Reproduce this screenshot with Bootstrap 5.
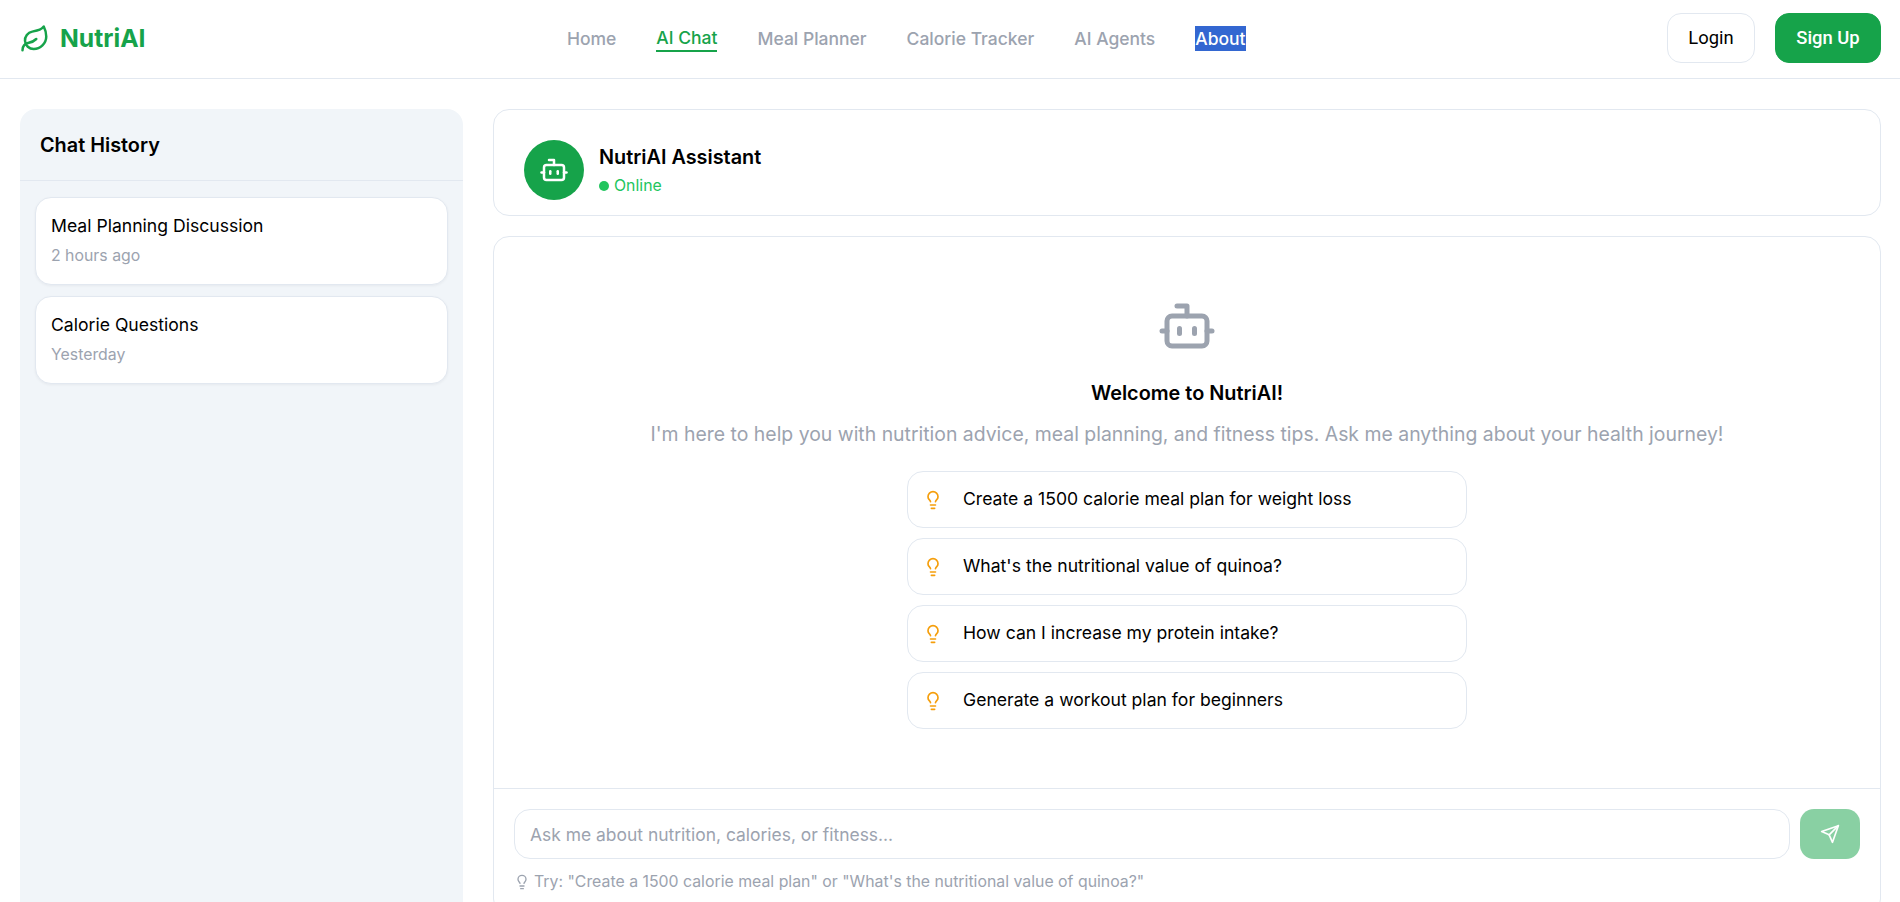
<!DOCTYPE html>
<html lang="en">
<head>
  <meta charset="UTF-8" />
  <meta name="viewport" content="width=device-width, initial-scale=1.0">
  <title>NutriAI | AI Chat</title>
  <link href="https://cdn.jsdelivr.net/npm/bootstrap@5.3.3/dist/css/bootstrap.min.css" rel="stylesheet">
  <style>
    html, body { height: 100%; overflow: hidden; }
    body {
      font-family: "Inter", "Liberation Sans", sans-serif;
      font-size: 17.6px;
      color: #000;
      background: #fff;
    }
    .top-bar {
      height: 79px;
      padding: 0 19px 0 20px;
      background: #fff;
      border-bottom: 1px solid #e2e8f0;
    }
    .logo { color: #16a34a; font-size: 24.7px; font-weight: 700; gap: 10px; text-decoration: none; }
    .top-links { gap: 40px; margin-bottom: 2px; font-size: 17.5px; }
    .top-links a { color: #9ca3af; font-weight: 500; text-decoration: none; display: block; line-height: 25px; }
    .top-links a.on { color: #16a34a; border-bottom: 2px solid #16a34a; }
    .top-links a.picked { color: #fff; background: #3367d1; }
    .auth-wrap { gap: 20px; margin-bottom: 2px; }
    .auth-btn {
      font-family: "Roboto", sans-serif;
      font-size: 18.4px;
      height: 50px;
      border-radius: 14px;
      padding: 0;
    }
    .btn-login { width: 88px; color: #000; background: #fff; border: 1px solid #e2e8f0; font-weight: 450; }
    .btn-signup { width: 106px; color: #fff; background: #16a34a; border: 1px solid #16a34a; font-weight: 500; }
    .page-body { gap: 30px; padding: 30px 19px 0 20px; height: 1000px; }
    .side-panel { width: 443px; flex: none; background: #f1f5f9; border-radius: 16px; }
    .side-head { padding: 20px; height: 72px; border-bottom: 1px solid #e2e8f0; font-size: 19.85px; font-weight: 600; line-height: 32px; }
    .side-list { padding: 16px 15px; gap: 11px; }
    .hist-item {
      height: 88px;
      padding: 14px 15px;
      background: #fff;
      border: 1px solid #e2e8f0;
      border-radius: 16px;
      box-shadow: 0 1px 3px rgba(15, 23, 42, .05);
    }
    .hist-title { font-weight: 400; line-height: 28px; }
    .hist-time { color: #9ca3af; font-size: 15.85px; line-height: 24px; margin-top: 4px; }
    .main-col { gap: 20px; min-width: 0; }
    .panel { background: #fff; border: 1px solid #e2e8f0; border-radius: 16px; }
    .bot-head { padding: 30px 30px 15px; gap: 15px; }
    .bot-avatar { width: 60px; height: 60px; background: #16a34a; color: #fff; }
    .bot-name { font-size: 19.85px; font-weight: 600; line-height: 28px; }
    .bot-status { color: #22c55e; font-size: 15.85px; line-height: 24px; gap: 5px; margin-top: 3px; }
    .status-dot { width: 10px; height: 10px; background: #22c55e; }
    .chat-area { height: 551px; padding: 59px 30px 0; color: #000; }
    .chat-robot { color: #9ca3af; display: block; }
    .chat-title { font-size: 19.85px; font-weight: 600; line-height: 30px; margin: 22px 0 11px; }
    .chat-sub { color: #9ca3af; font-size: 19.42px; line-height: 30px; margin-bottom: 22px; }
    .tips { width: 560px; gap: 10px; }
    .tip-row {
      height: 57px;
      padding: 0 15px;
      gap: 20px;
      border: 1px solid #e2e8f0;
      border-radius: 16px;
      font-weight: 400;
    }
    .tip-row svg { color: #f59e0b; flex: none; }
    .ask-area { border-top: 1px solid #e2e8f0; padding: 20px; }
    .ask-row { gap: 10px; }
    .ask-box {
      height: 50px;
      border: 1px solid #e2e8f0;
      border-radius: 16px;
      padding: 0 15px;
      font-size: 17.45px;
      box-shadow: none;
    }
    .ask-box::placeholder { color: #9ca3af; opacity: 1; }
    .ask-send { width: 60px; height: 50px; flex: none; background: #16a34a; opacity: .5; border: 0; border-radius: 14px; color: #fff; }
    .ask-hint { color: #9ca3af; font-size: 15.85px; gap: 4px; margin-top: 11px; line-height: 24px; }
  </style>
</head>
<body>

<nav class="top-bar d-flex align-items-center justify-content-between">
  <a href="#" class="logo d-flex align-items-center">
    <svg width="30" height="30" viewBox="0 0 24 24" fill="none" stroke="currentColor" stroke-width="2" stroke-linecap="round" stroke-linejoin="round"><path d="M11 20A7 7 0 0 1 9.8 6.1C15.5 5 17 4.48 19 2c1 2 2 4.18 2 8 0 5.5-4.78 10-10 10Z"/><path d="M2 21c0-3 1.85-5.36 5.08-6C9.5 14.52 12 13 13 12"/></svg>
    NutriAI
  </a>
  <div class="top-links d-flex align-items-center">
    <a href="#">Home</a>
    <a href="#" class="on">AI Chat</a>
    <a href="#">Meal Planner</a>
    <a href="#">Calorie Tracker</a>
    <a href="#">AI Agents</a>
    <a href="#" class="picked">About</a>
  </div>
  <div class="auth-wrap d-flex align-items-center">
    <button class="btn auth-btn btn-login">Login</button>
    <button class="btn auth-btn btn-signup">Sign Up</button>
  </div>
</nav>

<div class="page-body d-flex">
  <!-- sidebar -->
  <aside class="side-panel">
    <div class="side-head">Chat History</div>
    <div class="side-list d-flex flex-column">
      <div class="hist-item">
        <div class="hist-title">Meal Planning Discussion</div>
        <div class="hist-time">2 hours ago</div>
      </div>
      <div class="hist-item">
        <div class="hist-title">Calorie Questions</div>
        <div class="hist-time">Yesterday</div>
      </div>
    </div>
  </aside>

  <!-- chat -->
  <main class="main-col flex-grow-1 d-flex flex-column">
    <div class="panel bot-head d-flex align-items-center">
      <div class="bot-avatar rounded-circle d-flex align-items-center justify-content-center">
        <svg width="30" height="30" viewBox="0 0 24 24" fill="none" stroke="currentColor" stroke-width="2" stroke-linecap="round" stroke-linejoin="round"><path d="M12 8V4H8"/><rect width="16" height="12" x="4" y="8" rx="2"/><path d="M2 14h2"/><path d="M20 14h2"/><path d="M15 13v2"/><path d="M9 13v2"/></svg>
      </div>
      <div>
        <div class="bot-name">NutriAI Assistant</div>
        <div class="bot-status d-flex align-items-center"><span class="status-dot rounded-circle"></span>Online</div>
      </div>
    </div>

    <div class="panel">
      <div class="chat-area d-flex flex-column align-items-center">
        <svg class="chat-robot" width="60" height="60" viewBox="0 0 24 24" fill="none" stroke="currentColor" stroke-width="2" stroke-linecap="round" stroke-linejoin="round"><path d="M12 8V4H8"/><rect width="16" height="12" x="4" y="8" rx="2"/><path d="M2 14h2"/><path d="M20 14h2"/><path d="M15 13v2"/><path d="M9 13v2"/></svg>
        <div class="chat-title">Welcome to NutriAI!</div>
        <div class="chat-sub">I'm here to help you with nutrition advice, meal planning, and fitness tips. Ask me anything about your health journey!</div>
        <div class="tips d-flex flex-column">
          <div class="tip-row d-flex align-items-center">
            <svg width="20" height="20" viewBox="0 0 24 24" fill="none" stroke="currentColor" stroke-width="2" stroke-linecap="round" stroke-linejoin="round"><path d="M15 14c.2-1 .7-1.7 1.5-2.5 1-.9 1.5-2.2 1.5-3.5A6 6 0 0 0 6 8c0 1 .2 2.2 1.5 3.5.7.7 1.3 1.5 1.5 2.5"/><path d="M9 18h6"/><path d="M10 22h4"/></svg>
            Create a 1500 calorie meal plan for weight loss
          </div>
          <div class="tip-row d-flex align-items-center">
            <svg width="20" height="20" viewBox="0 0 24 24" fill="none" stroke="currentColor" stroke-width="2" stroke-linecap="round" stroke-linejoin="round"><path d="M15 14c.2-1 .7-1.7 1.5-2.5 1-.9 1.5-2.2 1.5-3.5A6 6 0 0 0 6 8c0 1 .2 2.2 1.5 3.5.7.7 1.3 1.5 1.5 2.5"/><path d="M9 18h6"/><path d="M10 22h4"/></svg>
            What's the nutritional value of quinoa?
          </div>
          <div class="tip-row d-flex align-items-center">
            <svg width="20" height="20" viewBox="0 0 24 24" fill="none" stroke="currentColor" stroke-width="2" stroke-linecap="round" stroke-linejoin="round"><path d="M15 14c.2-1 .7-1.7 1.5-2.5 1-.9 1.5-2.2 1.5-3.5A6 6 0 0 0 6 8c0 1 .2 2.2 1.5 3.5.7.7 1.3 1.5 1.5 2.5"/><path d="M9 18h6"/><path d="M10 22h4"/></svg>
            How can I increase my protein intake?
          </div>
          <div class="tip-row d-flex align-items-center">
            <svg width="20" height="20" viewBox="0 0 24 24" fill="none" stroke="currentColor" stroke-width="2" stroke-linecap="round" stroke-linejoin="round"><path d="M15 14c.2-1 .7-1.7 1.5-2.5 1-.9 1.5-2.2 1.5-3.5A6 6 0 0 0 6 8c0 1 .2 2.2 1.5 3.5.7.7 1.3 1.5 1.5 2.5"/><path d="M9 18h6"/><path d="M10 22h4"/></svg>
            Generate a workout plan for beginners
          </div>
        </div>
      </div>

      <div class="ask-area">
        <div class="ask-row d-flex">
          <input type="text" class="form-control ask-box" placeholder="Ask me about nutrition, calories, or fitness...">
          <button class="ask-send d-flex align-items-center justify-content-center" disabled>
            <svg width="20" height="20" viewBox="0 0 24 24" fill="none" stroke="currentColor" stroke-width="2" stroke-linecap="round" stroke-linejoin="round"><path d="m22 2-7 20-4-9-9-4Z"/><path d="M22 2 11 13"/></svg>
          </button>
        </div>
        <div class="ask-hint d-flex align-items-center">
          <svg width="16" height="16" viewBox="0 0 24 24" fill="none" stroke="currentColor" stroke-width="2" stroke-linecap="round" stroke-linejoin="round"><path d="M15 14c.2-1 .7-1.7 1.5-2.5 1-.9 1.5-2.2 1.5-3.5A6 6 0 0 0 6 8c0 1 .2 2.2 1.5 3.5.7.7 1.3 1.5 1.5 2.5"/><path d="M9 18h6"/><path d="M10 22h4"/></svg>
          Try: "Create a 1500 calorie meal plan" or "What's the nutritional value of quinoa?"
        </div>
      </div>
    </div>
  </main>
</div>

<script src="https://cdn.jsdelivr.net/npm/bootstrap@5.3.3/dist/js/bootstrap.bundle.min.js"></script>
</body>
</html>
